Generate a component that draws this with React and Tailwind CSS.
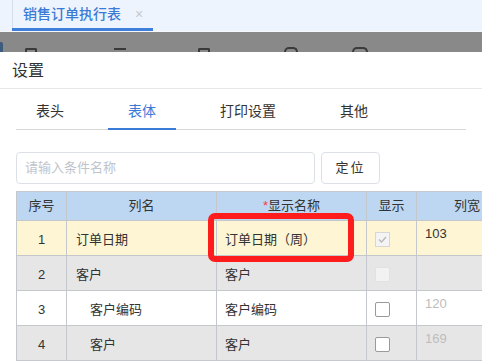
import React from "react";

const rows = [
  { no: 1, name: "订单日期", label: "订单日期（周）", indent: false, bg: "bg-[#fdf5d3]", check: "checked", width: "103", widthMuted: false },
  { no: 2, name: "客户", label: "客户", indent: false, bg: "bg-[#e6e6e6]", check: "disabled", width: "", widthMuted: false },
  { no: 3, name: "客户编码", label: "客户编码", indent: true, bg: "bg-white", check: "empty", width: "120", widthMuted: true },
  { no: 4, name: "客户", label: "客户", indent: true, bg: "bg-[#e6e6e6]", check: "empty", width: "169", widthMuted: true },
];

function Check({ state }) {
  if (state === "checked") {
    return (
      <div className="w-[15px] h-[15px] border border-[#d6d6d6] bg-[#f4f4f4] flex items-center justify-center">
        <svg width="9" height="7" viewBox="0 0 9 7" fill="none">
          <path d="M1 3.5 L3.5 6 L8 1" stroke="#b9b9b9" strokeWidth="1.4" />
        </svg>
      </div>
    );
  }
  if (state === "disabled") {
    return <div className="w-[15px] h-[15px] border border-[#e2e2e2] bg-[#f2f2f2]" />;
  }
  return <div className="w-[15px] h-[15px] border border-[#9a9a9a] bg-white rounded-[2px]" />;
}

export default function App() {
  return (
    <div className="w-[482px] h-[364px] overflow-hidden bg-white font-['Liberation_Sans','Noto_Sans_CJK_SC',sans-serif] text-[#333]">
      {/* tab strip */}
      <div className="h-[32px] bg-[#eef4fd] border-b border-[#f6f8fc] flex items-end pl-[12px]">
        <div className="h-[31px] w-[141px] flex flex-col border-l border-[#d5deea]">
          <div className="flex-1 flex items-center pl-[10px] gap-[14px]">
            <span className="text-[14px] font-medium text-[#3a7bd5] leading-none">销售订单执行表</span>
            <span className="text-[14px] text-[#c3c8d0] leading-none">×</span>
          </div>
          <div className="h-[3px] bg-[#3d7fd9] -ml-px" />
        </div>
      </div>

      {/* dimmed toolbar */}
      <div className="h-[20px] bg-[#898989] flex items-end overflow-hidden">
        <div className="w-[3px] h-[10px] bg-[#3d5b7c] rounded-tr-[2px]" />
        <div className="ml-[22px] w-[12px] h-[4px] border-t-2 border-x-2 border-[#3a3a3a] rounded-t-[2px]" />
        <div className="ml-[77px] w-[12px] h-[4px] border-t-2 border-[#3a3a3a]" />
        <div className="ml-[72px] w-[12px] h-[4px] border-t-2 border-x-2 border-[#3a3a3a] rounded-t-[2px]" />
        <div className="ml-[74px] w-[14px] h-[5px] border-t-2 border-x-2 border-[#3a3a3a] rounded-t-full" />
        <div className="ml-[54px] w-[16px] h-[5px] border-t-2 border-x-2 border-[#3a3a3a] rounded-t-full" />
      </div>

      {/* dialog */}
      <div className="bg-white">
        <div className="h-[37px] border-b border-[#e8e8e8] flex items-center pl-[12px] pt-[2px]">
          <span className="text-[16px] text-[#333]">设置</span>
        </div>

        <div className="px-[16px]">
          <div className="flex gap-[24px] border-b border-[#d9d9d9] h-[41px]">
            {["表头", "表体", "打印设置", "其他"].map((t, i) => (
              <div
                key={t}
                className={
                  "px-[20px] flex items-center pt-[6px] text-[14px] -mb-px " +
                  (i === 1 ? "text-[#3b7bd8] border-b-2 border-[#3b7bd8]" : "text-[#333] border-b-2 border-transparent")
                }
              >
                {t}
              </div>
            ))}
          </div>

          <div className="flex gap-[6px] mt-[22px]">
            <div className="w-[299px] h-[32px] border border-[#dcdfe6] rounded-[4px] flex items-center pl-[8px]">
              <span className="text-[13px] text-[#c0c4cc]">请输入条件名称</span>
            </div>
            <div className="w-[59px] h-[32px] border border-[#dcdfe6] rounded-[4px] flex items-center justify-center">
              <span className="text-[13px] tracking-[2px] text-[#333]">定位</span>
            </div>
          </div>
        </div>

        {/* table */}
        <div className="relative ml-[16px] mt-[7px] w-[520px] text-[13px]">
          <div className="flex h-[30px] bg-[#bdd7f2] border-t border-l border-b border-[#c4c8cc]">
            <div className="w-[50px] border-r border-[#c4c8cc] flex items-center justify-center">序号</div>
            <div className="w-[150px] border-r border-[#c4c8cc] flex items-center justify-center">列名</div>
            <div className="w-[150px] border-r border-[#c4c8cc] flex items-center justify-center">
              <span className="text-[#ff3b3b]">*</span>显示名称
            </div>
            <div className="w-[50px] border-r border-[#c4c8cc] flex items-center justify-center">显示</div>
            <div className="w-[100px] flex items-center justify-center">列宽</div>
          </div>
          {rows.map((r) => (
            <div key={r.no} className={"flex h-[35px] border-l border-b border-[#c4c8cc] " + r.bg}>
              <div className="w-[50px] border-r border-[#c4c8cc] flex items-center justify-center pt-[3px]">{r.no}</div>
              <div className={"w-[150px] border-r border-[#c4c8cc] flex items-center pt-[3px] " + (r.indent ? "pl-[23px]" : "pl-[9px]")}>
                {r.name}
              </div>
              <div className="w-[150px] border-r border-[#c4c8cc] flex items-center pl-[8px] pt-[3px]">{r.label}</div>
              <div className="w-[50px] border-r border-[#c4c8cc] flex items-center pl-[8px] pt-[2px]">
                <Check state={r.check} />
              </div>
              <div className={"w-[100px] pl-[8px] pt-[3px] " + (r.widthMuted ? "text-[#bdbdbd]" : "text-[#333]")}>
                {r.width}
              </div>
            </div>
          ))}

          {/* highlight */}
          <div className="absolute left-[192px] top-[22px] w-[146px] h-[49px] border-[6px] border-[#ff1c1c] rounded-[7px]" />
        </div>
      </div>
    </div>
  );
}
